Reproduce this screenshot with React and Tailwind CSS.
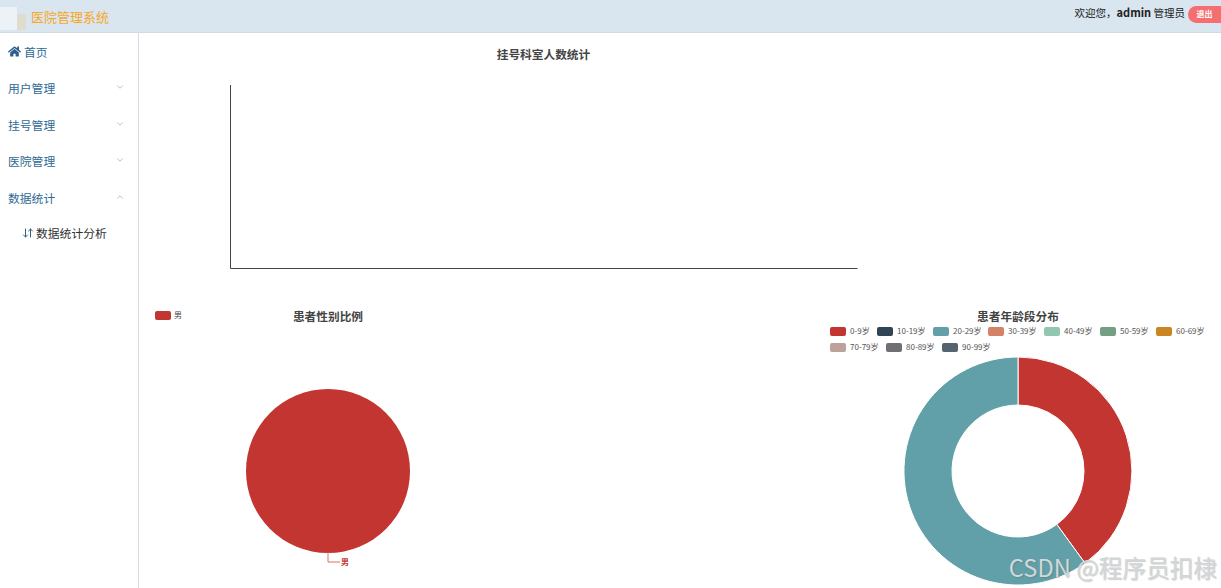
import React from 'react';
import { FaHome } from 'react-icons/fa';
import { ChevronDown, ChevronUp, ArrowDownUp } from 'lucide-react';

const FONT = '"Noto Sans CJK SC", "Liberation Sans", sans-serif';

const menus = [
  { label: '用户管理' },
  { label: '挂号管理' },
  { label: '医院管理' },
  { label: '数据统计', open: true },
];

const ageLegend = [
  { name: '0-9岁', color: '#c23531', x: 10, y: 27 },
  { name: '10-19岁', color: '#2f4554', x: 57, y: 27 },
  { name: '20-29岁', color: '#61a0a8', x: 113, y: 27 },
  { name: '30-39岁', color: '#d48265', x: 168, y: 27 },
  { name: '40-49岁', color: '#91c7ae', x: 224, y: 27 },
  { name: '50-59岁', color: '#749f83', x: 280, y: 27 },
  { name: '60-69岁', color: '#ca8622', x: 336, y: 27 },
  { name: '70-79岁', color: '#bda29a', x: 10, y: 43 },
  { name: '80-89岁', color: '#6e7074', x: 66, y: 43 },
  { name: '90-99岁', color: '#546570', x: 122, y: 43 },
];

function Header() {
  return (
    <header className="h-[33px] shrink-0 bg-[#d9e5ef] border-b border-[#d3dbe2] flex items-center justify-between">
      <div className="flex items-center h-full">
        <div className="relative w-[31px] h-full shrink-0">
          <div className="absolute left-[17px] top-[14px] w-[9px] h-[16px] bg-[#e0dccf]" />
          <div className="absolute left-0 top-[7px] w-[17px] h-[23px] bg-[#edf2f6]" />
        </div>
        <span className="text-[13px] text-[#f7a81f] leading-none">医院管理系统</span>
      </div>
      <div className="flex items-center -mt-[4px]">
        <span className="text-[10.5px] text-[#222] mr-[3px] mb-[3px]">
          欢迎您，<b className="font-bold text-[11px]">admin</b> 管理员
        </span>
        <button className="w-[33px] h-[17px] rounded-l-full bg-[#f56f71] text-white text-[8px] leading-none font-bold">
          退出
        </button>
      </div>
    </header>
  );
}

function Sidebar() {
  return (
    <aside className="w-[139px] shrink-0 border-r border-[#d8dce0] bg-white pt-[0.5px] text-[11.8px] text-[#2f6a94]">
      <div className="h-[36.5px] pl-[8px] flex items-center gap-[3px]">
        <FaHome className="w-[13px] h-[13px] text-[#2c5f8f]" />
        <span>首页</span>
      </div>
      {menus.map((m) => (
        <div key={m.label} className="h-[36.5px] pl-[8px] pr-[13px] flex items-center justify-between">
          <span>{m.label}</span>
          {m.open ? (
            <ChevronUp className="w-[10px] h-[10px] text-[#a9b4bd] -mt-[2px]" />
          ) : (
            <ChevronDown className="w-[10px] h-[10px] text-[#a9b4bd] -mt-[2px]" />
          )}
        </div>
      ))}
      <div className="h-[34px] pl-[22px] flex items-center gap-[2px] text-[#303133]">
        <ArrowDownUp className="w-[12px] h-[12px] text-[#2f5f80]" />
        <span>数据统计分析</span>
      </div>
    </aside>
  );
}

function DeptChart() {
  return (
    <svg width="1082" height="267" className="block shrink-0">
      <text x="404.5" y="26" textAnchor="middle" fontSize="11.7" fontWeight="700" fill="#444" fontFamily={FONT}>
        挂号科室人数统计
      </text>
      <path d="M91.5 52V235.5H718.5" fill="none" stroke="#444" strokeWidth="1" />
    </svg>
  );
}

function GenderChart() {
  return (
    <svg width="400" height="288" className="block shrink-0">
      <rect x="16" y="11" width="16" height="9" rx="2" fill="#c23531" />
      <text x="35" y="18" fontSize="8" fill="#444" fontFamily={FONT}>男</text>
      <text x="189" y="20.5" textAnchor="middle" fontSize="11.7" fontWeight="700" fill="#444" fontFamily={FONT}>
        患者性别比例
      </text>
      <circle cx="189" cy="171" r="82" fill="#c23531" />
      <path d="M189 252V262H201" fill="none" stroke="#d9706d" strokeWidth="1" />
      <text x="202" y="265" fontSize="8" fontWeight="700" fill="#c23531" fontFamily={FONT}>男</text>
    </svg>
  );
}

function AgeChart() {
  return (
    <svg width="401" height="288" className="block shrink-0">
      <text x="198" y="20.5" textAnchor="middle" fontSize="11.7" fontWeight="700" fill="#444" fontFamily={FONT}>
        患者年龄段分布
      </text>
      {ageLegend.map((l) => (
        <g key={l.name}>
          <rect x={l.x} y={l.y} width="16" height="9" rx="2" fill={l.color} />
          <text x={l.x + 20} y={l.y + 7} fontSize="8" fill="#555" fontFamily={FONT}>{l.name}</text>
        </g>
      ))}
      <path
        d="M198 57A114 114 0 0 1 265 263.2L236.8 224.4A66 66 0 0 0 198 105Z"
        fill="#c23531"
        stroke="#fff"
        strokeWidth="1"
      />
      <path
        d="M265 263.2A114 114 0 1 1 198 57V105A66 66 0 1 0 236.8 224.4Z"
        fill="#61a0a8"
        stroke="#fff"
        strokeWidth="1"
      />
    </svg>
  );
}

export default function App() {
  return (
    <div className="relative h-screen w-full overflow-hidden bg-white flex flex-col" style={{ fontFamily: FONT }}>
      <Header />
      <div className="flex flex-1 min-h-0">
        <Sidebar />
        <main className="flex-1 min-w-0 overflow-hidden">
          <DeptChart />
          <div className="flex justify-between">
            <GenderChart />
            <AgeChart />
          </div>
        </main>
      </div>
      {/* watermark */}
      <div className="absolute right-[4px] bottom-[8px] text-[23.7px] leading-none text-[#d2d8da] [text-shadow:1px_1px_1px_rgba(90,90,90,0.3)]">
        CSDN @程序员扣棣
      </div>
    </div>
  );
}
